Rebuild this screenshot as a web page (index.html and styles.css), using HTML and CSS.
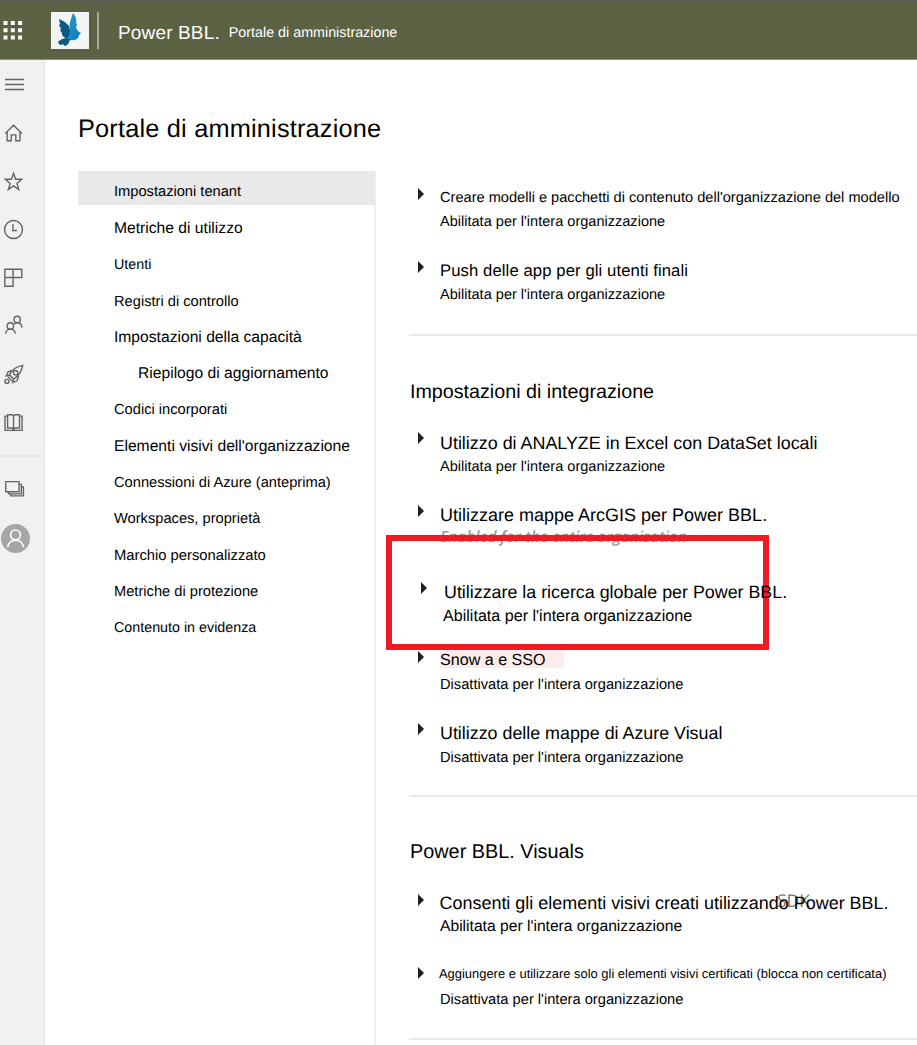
FILE: index.html
```html
<!DOCTYPE html>
<html lang="it">
<head>
<meta charset="utf-8">
<title>Portale di amministrazione</title>
<link rel="stylesheet" href="styles.css">
</head>
<body>
<header class="topbar">
  <svg class="waffle" width="20" height="20" viewBox="0 0 20 20" fill="#fff"><path d="M.5 0h4v4h-4zM7.800 0h4v4h-4zM15.100 0h4v4h-4zM.5 7.200h4v4h-4zM7.800 7.200h4v4h-4zM15.100 7.200h4v4h-4zM.5 14.400h4v4h-4zM7.800 14.400h4v4h-4zM15.100 14.400h4v4h-4z"/></svg>
  <svg class="logo" width="38" height="37" viewBox="0 0 38 37">
    <defs><linearGradient id="wing" x1="0" y1="0" x2="1" y2="1"><stop offset="0" stop-color="#2b9fd0"/><stop offset="1" stop-color="#087db8"/></linearGradient></defs>
    <rect width="38" height="37" fill="#f4f5f5"/>
    <path d="M8 7Q14 9 18 14L20 22 16 27Q10 24 11 21L9 18 10 17 8 13 9 12Z" fill="#0b5a86"/>
    <path d="M22 1Q26 6 25 11L26 12 25 16 27 19Q28 20 30 21Q27 23 27 26Q24 29 19 28L17 32 14 34 12 32 9 33 7 30 12 27 18 25Q18 21 19 18Q18 11 20 7Z" fill="url(#wing)"/>
    <path d="M7 30Q11 25 19 27L17 32 14 34 12 32 9 33Z" fill="#145779"/>
  </svg>
  <span class="divider"></span>
  <span class="brand">Power BBL.</span>
  <span class="portal">Portale di amministrazione</span>
</header>
<div class="shell">
  <aside class="rail">
    <div class="rail-main">
      <svg class="bars" viewBox="0 0 22 22"><path d="M2 5.500h19M2 10.500h19M2 15.500h19"/></svg>
      <svg viewBox="0 0 24 24"><path d="M2.500 12.500 11.500 3.500l9 9M4.500 10.800V20.500H9v-6.500h5v6.500h4.500v-9.700"/></svg>
      <svg viewBox="0 0 24 24"><path d="m11.500 2.500 2.300 6.500h6.700l-5.300 4.500 2 6.700-5.700-4-5.700 4 2-6.700L2.500 9h6.700z"/></svg>
      <svg viewBox="0 0 24 24"><circle cx="11.500" cy="11.500" r="9.800"/><path d="M10.800 5.500v7h4.500"/></svg>
      <svg viewBox="0 0 24 24"><path d="M2 2.500h18.500v9H2zM2 11.500v9.500h9V2.500M11 11.500V21"/></svg>
      <svg viewBox="0 0 24 24"><circle cx="8" cy="12" r="3.500"/><circle cx="15.500" cy="4.800" r="3.500"/><path d="M3 20.500c0-6.700 10.300-6.700 10.300 0M12.300 9.800c3.500-2.800 8.200-1 8.400 4.200"/></svg>
      <svg viewBox="0 0 24 24"><path d="M7 11.500Q12 3 21.500 1.500Q20 11 11.500 16.500zM10 7 5.500 8.500 3.500 13l4-.7 4 4-.8 4 4.800-2.300L17 12.500M5 13.500 10 18.500"/><circle cx="13.800" cy="9.500" r="2.400"/><circle cx="4.200" cy="19" r="2.200"/></svg>
      <svg viewBox="0 0 24 24"><path d="M11.500 4.500 10 3H5v14.500h5l1.500 2 1.500-2h5V3h-5zM11.500 4.500v15M5 4.500H2.200V20h18.600V4.500H18"/></svg>
    </div>
    <div class="rail-extra">
      <svg viewBox="0 0 24 24"><path d="M3 4h14.500v11H3zM6 15v2.300h14V7h-2.500M8.500 17.300v2.200h13.800V9.800H20"/></svg>
      <svg class="avatar" viewBox="0 0 28 28"><circle cx="14" cy="14" r="14"/><g><circle cx="14" cy="10.500" r="4.700"/><path d="M6.500 22.500c.8-9.300 14.200-9.300 15 0"/></g></svg>
    </div>
  </aside>
  <main class="page">
    <h1>Portale di amministrazione</h1>
    <div class="columns">
      <nav class="menu">
        <a class="selected">Impostazioni tenant</a>
        <a class="wide">Metriche di utilizzo</a>
        <a class="small">Utenti</a>
        <a>Registri di controllo</a>
        <a class="wide">Impostazioni della capacità</a>
        <a class="wide nested">Riepilogo di aggiornamento</a>
        <a>Codici incorporati</a>
        <a class="wide">Elementi visivi dell'organizzazione</a>
        <a>Connessioni di Azure (anteprima)</a>
        <a>Workspaces, proprietà</a>
        <a class="brand-link">Marchio personalizzato</a>
        <a>Metriche di protezione</a>
        <a class="small">Contenuto in evidenza</a>
      </nav>
      <div class="settings">
        <section class="first">
          <div class="item"><i class="caret"></i><div><p class="title compact">Creare modelli e pacchetti di contenuto dell'organizzazione del modello</p><p class="state">Abilitata per l'intera organizzazione</p></div></div>
          <div class="item"><i class="caret"></i><div><p class="title spaced">Push delle app per gli utenti finali</p><p class="state">Abilitata per l'intera organizzazione</p></div></div>
        </section>
        <section>
          <h2>Impostazioni di integrazione</h2>
          <div class="item"><i class="caret"></i><div><p class="title">Utilizzo di ANALYZE in Excel con DataSet locali</p><p class="state">Abilitata per l'intera organizzazione</p></div></div>
          <div class="item before-focus"><i class="caret"></i><div><p class="title arcgis">Utilizzare mappe ArcGIS per Power BBL.</p><p class="state ghost">Enabled for the entire organization</p></div></div>
          <div class="item focus"><span class="frame"></span><i class="caret"></i><div><p class="title">Utilizzare la ricerca globale per Power BBL.</p><p class="state">Abilitata per l'intera organizzazione</p></div></div>
          <div class="item after-focus"><i class="caret"></i><div><p class="title sso"><span>Snow a e SSO</span></p><p class="state off">Disattivata per l'intera organizzazione</p></div></div>
          <div class="item last"><i class="caret"></i><div><p class="title azure">Utilizzo delle mappe di Azure Visual</p><p class="state off">Disattivata per l'intera organizzazione</p></div></div>
        </section>
        <section>
          <h2 class="visuals">Power BBL. Visuals</h2>
          <div class="item"><i class="caret"></i><div><p class="title create">Consenti gli elementi visivi creati utilizzando Power BBL.<span class="sdk">SDK</span></p><p class="state large">Abilitata per l'intera organizzazione</p></div></div>
          <div class="item end"><i class="caret"></i><div><p class="title tiny">Aggiungere e utilizzare solo gli elementi visivi certificati (blocca non certificata)</p><p class="state off">Disattivata per l'intera organizzazione</p></div></div>
        </section>
      </div>
    </div>
  </main>
</div>
</body>
</html>
```
FILE: styles.css
```css
* { box-sizing: border-box; }
body { margin: 0; width: 917px; height: 1045px; overflow: hidden; background: #fff; color: #000; font-family: "Liberation Sans", Arial, sans-serif; text-rendering: geometricPrecision; }
h1, h2, p { margin: 0; font-weight: 400; white-space: nowrap; }
.topbar { display: flex; height: 60px; background: #5a6243; border-top: 1px solid #5c5c58; border-bottom: 1px solid #8b917b; color: #fff; padding-left: 3px; white-space: nowrap; }
.waffle { margin: 20px 0 0; }
.logo { margin: 11px 0 0 28px; }
.divider { width: 2px; height: 37px; margin: 11px 0 0 8px; background: #a7ab9b; }
.brand { margin-left: 19px; font-size: 19px; line-height: 24px; padding-top: 21px; letter-spacing: .15px; }
.portal { margin-left: 9px; font-size: 14.3px; line-height: 20px; padding-top: 22px; }
.shell { display: flex; height: 985px; }
.rail { width: 45px; flex: none; background: #f2f1f0; border-right: 2px solid #eaeaea; }
.rail svg { display: block; width: 22px; height: 22px; fill: none; stroke: #66616a; stroke-width: 1.5; }
.rail-main { display: grid; grid-auto-rows: 48.3px; height: 397px; padding: 14px 0 0 2.500px; border-bottom: 2px solid #e6e6e6; }
.rail-extra { padding: 21px 0 0 2.500px; }
.rail .avatar { width: 29px; height: 29px; margin: 24px 0 0 -1.500px; stroke: none; fill: #a6a6a6; }
.avatar g { fill: none; stroke: #fff; stroke-width: 1.6; }
.page { flex: 1; min-width: 0; padding: 53px 0 0 33px; }
h1 { font-size: 25.33px; line-height: 32px; letter-spacing: .19px; }
.columns { display: flex; margin-top: 26px; height: 874px; }
.menu { width: 298px; flex: none; border-right: 2px solid #f0f0f0; }
.menu a { display: block; padding-left: 36px; line-height: 36.3px; font-size: 14.67px; white-space: nowrap; }
.menu .selected { height: 34px; margin: 0 -1px 6px 0; line-height: 43.500px; background: #e9e9e9; }
.menu .wide { font-size: 15.65px; }
.menu .small { font-size: 14.3px; }
.menu .brand-link { font-size: 14.78px; }
.menu .nested { padding-left: 60px; }
.settings { flex: 1; min-width: 0; margin-left: 33px; }
section { border-bottom: 2px solid #e9e9e9; padding-bottom: 6px; }
.first { padding-top: 11px; }
h2 { font-size: 19.7px; line-height: 24px; padding: 43.500px 0 23px 1px; }
.visuals { font-size: 19.85px; padding: 43.500px 0 24px 1px; }
.item { display: flex; height: 73px; padding-left: 9px; position: relative; }
.caret { flex: none; width: 0; height: 0; margin: 5.500px 16px 0 0; border: solid transparent; border-width: 6px 0 6px 6px; border-left-color: #202020; }
.item > div { padding-top: 4.400px; }
.title { font-size: 17.9px; line-height: 24px; position: relative; }
.state { font-size: 14.55px; line-height: 24px; }
.off { font-size: 14.68px; }
.compact { font-size: 14.6px; top: -.5px; }
.spaced { font-size: 16.67px; letter-spacing: .1px; }
.arcgis { font-size: 18px; top: -.6px; }
.azure { font-size: 17.85px; top: -.6px; }
.before-focus { height: 76.500px; }
.ghost { font-family: "Open Sans", sans-serif; font-style: italic; font-size: 15.42px; font-weight: 600; color: #999; line-height: 20px; margin-top: -1px; }
.focus { height: 69px; padding-left: 11.500px; }
.focus .title, .focus .state { position: relative; }
.focus .title { font-size: 17.85px; left: .5px; }
.focus .state { font-size: 16.1px; left: -.5px; }
.focus > div { padding-left: 1px; }
.frame { position: absolute; left: -23px; top: -41px; width: 383px; height: 115px; border: 6px solid #ed1c24; }
.after-focus { height: 72.500px; }
.sso { font-size: 16.1px; top: -1px; }
.sso span { display: inline-block; width: 124px; height: 17px; line-height: 18px; background: #fdeceb; }
.last { height: 71px; }
.create { font-size: 17.97px; isolation: isolate; left: -.5px; top: -1px; }
.sdk { position: absolute; left: 337.500px; top: -2px; z-index: -1; font: 17.500px/24px "Open Sans", sans-serif; color: #777; }
.large { font-size: 15.65px; position: relative; top: -1px; }
.tiny { font-size: 12.930px; top: -3.500px; left: -1px; }
.end { height: 71px; }
.end .state { position: relative; top: -1px; }
```
